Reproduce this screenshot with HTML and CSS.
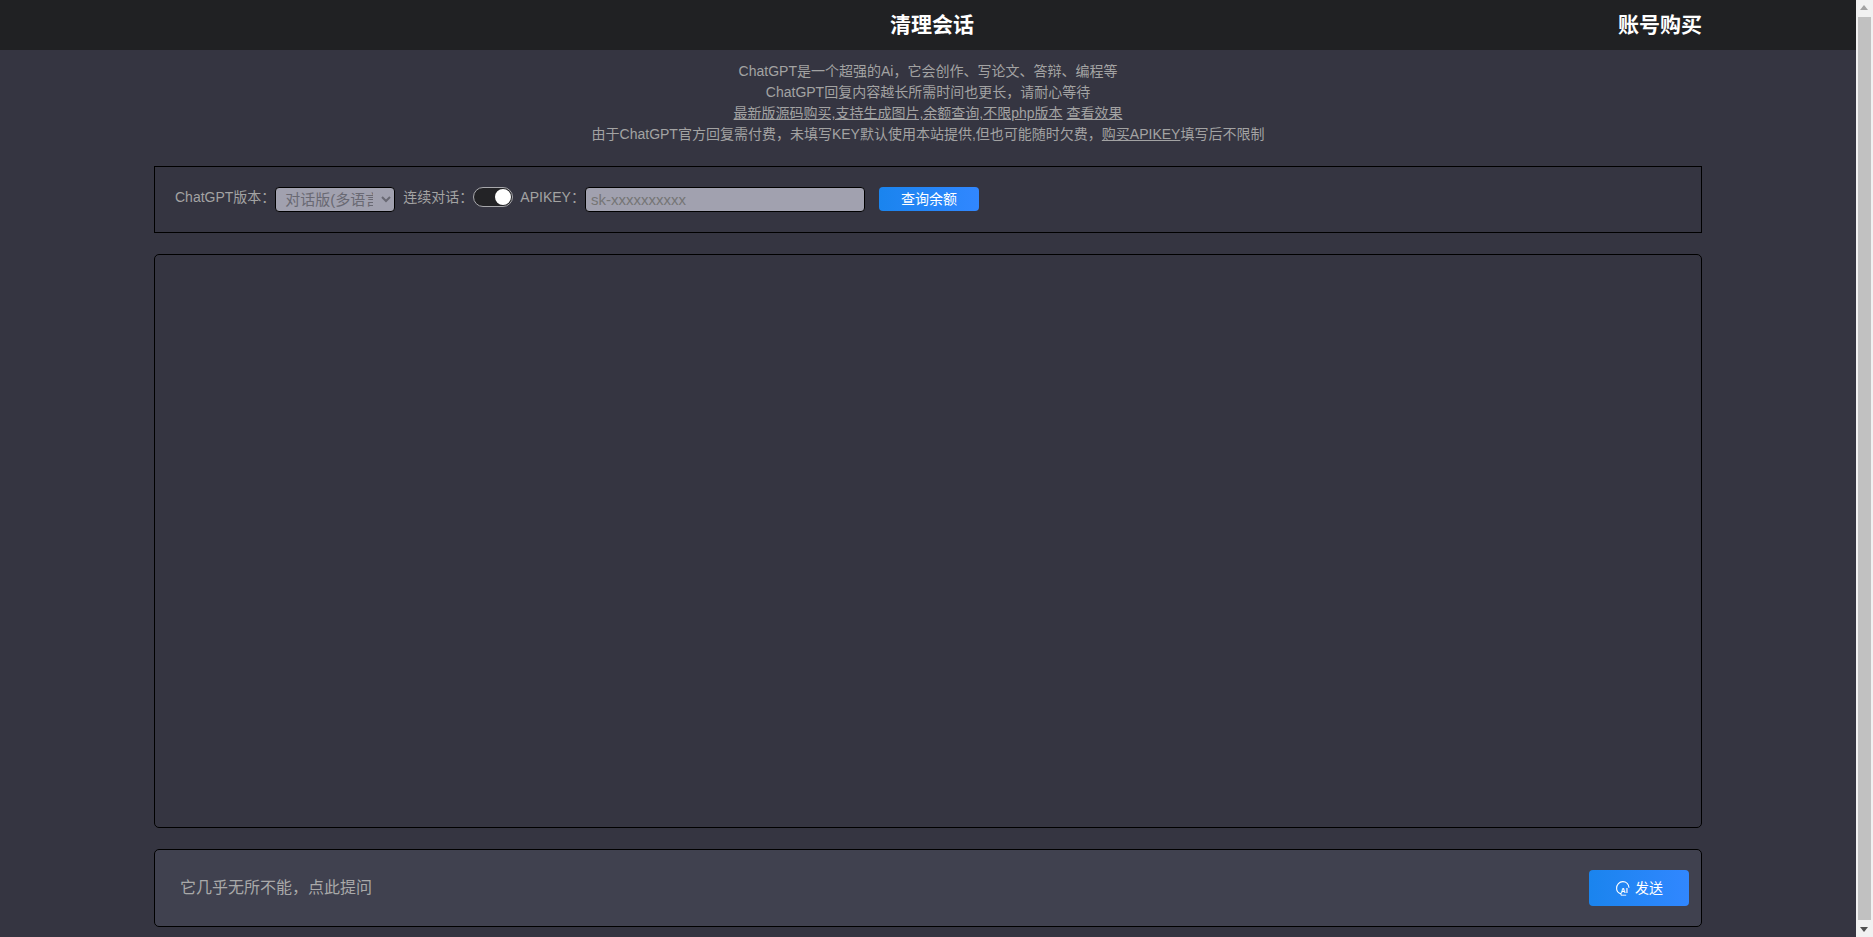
FILE: index.html
```html
<!DOCTYPE html>
<html lang="zh-CN">
<head>
<meta charset="utf-8">
<title>ChatGPT</title>
<link rel="stylesheet" href="styles.css">
</head>
<body>
<div class="app">
  <header class="topbar">
    <div class="topbar-inner">
      <a class="top-center" href="#">清理会话</a>
      <a class="top-right" href="#">账号购买</a>
    </div>
  </header>
  <main class="page">
    <section class="intro">
      <div>ChatGPT是一个超强的Ai，它会创作、写论文、答辩、编程等</div>
      <div>ChatGPT回复内容越长所需时间也更长，请耐心等待</div>
      <div><a href="#">最新版源码购买,支持生成图片,余额查询,不限php版本</a> <a href="#">查看效果</a></div>
      <div>由于ChatGPT官方回复需付费，未填写KEY默认使用本站提供,但也可能随时欠费，<a href="#">购买APIKEY</a>填写后不限制</div>
    </section>
    <section class="settings">
      <span class="label">ChatGPT版本：</span>
      <select class="field version"><option>对话版(多语言)</option></select>
      <span class="label">连续对话：</span>
      <span class="toggle"><span class="knob"></span></span>
      <span class="label">APIKEY：</span>
      <input class="field key" type="text" placeholder="sk-xxxxxxxxxx">
      <button class="btn balance" type="button">查询余额</button>
    </section>
    <section class="chat"></section>
    <section class="composer">
      <textarea class="prompt" rows="1" placeholder="它几乎无所不能，点此提问"></textarea>
      <button class="btn send" type="button">
        <svg class="send-icon" viewBox="0 0 16 16" width="16" height="16" aria-hidden="true">
          <path d="M6 15.2v-1.7H5C3 12.6 1.6 10.6 1.6 8.2 1.6 4.6 4.3 1.6 7.8 1.6s6 2.6 6.2 6.1" fill="none" stroke="#fff" stroke-width="1.1"/>
          <path d="M6 15.2h5.2" fill="none" stroke="#d8e9ff" stroke-width="1.1"/>
          <text x="5.6" y="12.6" class="ai">AI</text>
        </svg>
        <span>发送</span>
      </button>
    </section>
  </main>
</div>
<aside class="scrollbar" aria-hidden="true">
  <span class="arrow up"></span>
  <span class="thumb"></span>
  <span class="arrow down"></span>
</aside>
</body>
</html>
```
FILE: styles.css
```css
* { box-sizing: border-box; }
html { background: #353541; }
body {
  margin: 0;
  height: 937px;
  overflow: hidden;
  display: flex;
  background: #353541;
  color: #a3a3a3;
  font-family: "Liberation Sans", "Noto Sans CJK SC", sans-serif;
  font-size: 14px;
}
a { color: inherit; }
.app { flex: 1; min-width: 0; }
.scrollbar {
  width: 17px;
  background: #f1f1f1;
  display: flex;
  flex-direction: column;
  align-items: center;
}
.arrow { width: 17px; height: 17px; flex: none; position: relative; }
.arrow::after {
  content: "";
  position: absolute;
  left: 4px;
  border-left: 4.5px solid transparent;
  border-right: 4.5px solid transparent;
}
.up::after { top: 5px; border-bottom: 5px solid #a3a3a3; }
.down::after { top: 7px; border-top: 5px solid #505050; }
.thumb { flex: 1; width: 13px; background: #c1c1c1; }
.topbar { height: 50px; background: #202123; }
.topbar-inner {
  width: 1548px;
  height: 50px;
  margin: 0 auto;
  display: grid;
  grid-template-columns: 1fr auto 1fr;
  align-items: center;
  font-size: 21px;
  font-weight: 700;
  line-height: 48px;
}
.topbar a { color: #fff; text-decoration: none; }
.top-center { grid-column: 2; margin-left: 8px; }
.top-right { grid-column: 3; justify-self: end; }
.page {
  width: 1548px;
  margin: 0 auto;
  display: flex;
  flex-direction: column;
}
.intro { padding-top: 11px; text-align: center; line-height: 21px; }
.settings {
  margin-top: 21px;
  height: 67px;
  border: 1px solid #000;
  padding: 20px 0 0 20px;
  display: flex;
  align-items: flex-start;
}
.label { line-height: 20px; }
.field {
  height: 25px;
  border: 1px solid #000;
  border-radius: 4px;
  background: #a1a1af;
  font-family: inherit;
  font-size: 15px;
  color: #696973;
}
.version { width: 120px; margin: 0 8px 0 0; padding: 0 5px; }
.toggle {
  width: 40px;
  height: 20px;
  margin: 0 7px 0 0;
  border: 1.5px solid #a8a8ac;
  border-radius: 10px;
  background: #232326;
  display: flex;
  justify-content: flex-end;
  align-items: center;
  padding-right: 1px;
}
.knob { width: 16px; height: 16px; border-radius: 50%; background: #fff; }
.key { width: 280px; padding: 0 5px; }
.key::placeholder { color: #757575; opacity: 1; }
.btn {
  border: 0;
  border-radius: 4px;
  background: linear-gradient(90deg, #1a84ee, #3187ff);
  color: #fff;
  font-family: inherit;
  font-size: 14px;
}
.balance { width: 100px; height: 24px; margin-left: 14px; padding: 0; line-height: 22px; }
.chat {
  margin-top: 21px;
  height: 574px;
  border: 1px solid #000;
  border-radius: 5px;
}
.composer {
  margin-top: 21px;
  height: 78px;
  border: 1px solid #000;
  border-radius: 5px;
  background: #40414f;
  display: flex;
  align-items: center;
  justify-content: space-between;
  padding: 0 12px 0 25px;
}
.prompt {
  flex: 1;
  height: 24px;
  border: 0;
  outline: 0;
  resize: none;
  padding: 0;
  background: transparent;
  font-family: inherit;
  font-size: 16px;
  line-height: 24px;
  color: #a9a9a9;
}
.prompt::placeholder { color: #a9a9a9; opacity: 1; }
.send {
  width: 100px;
  height: 36px;
  display: flex;
  align-items: center;
  justify-content: center;
  gap: 4px;
  line-height: 34px;
}
.send-icon { display: block; }
.ai { font-size: 7px; font-weight: 700; fill: #fff; font-family: "Liberation Sans", sans-serif; }
```
